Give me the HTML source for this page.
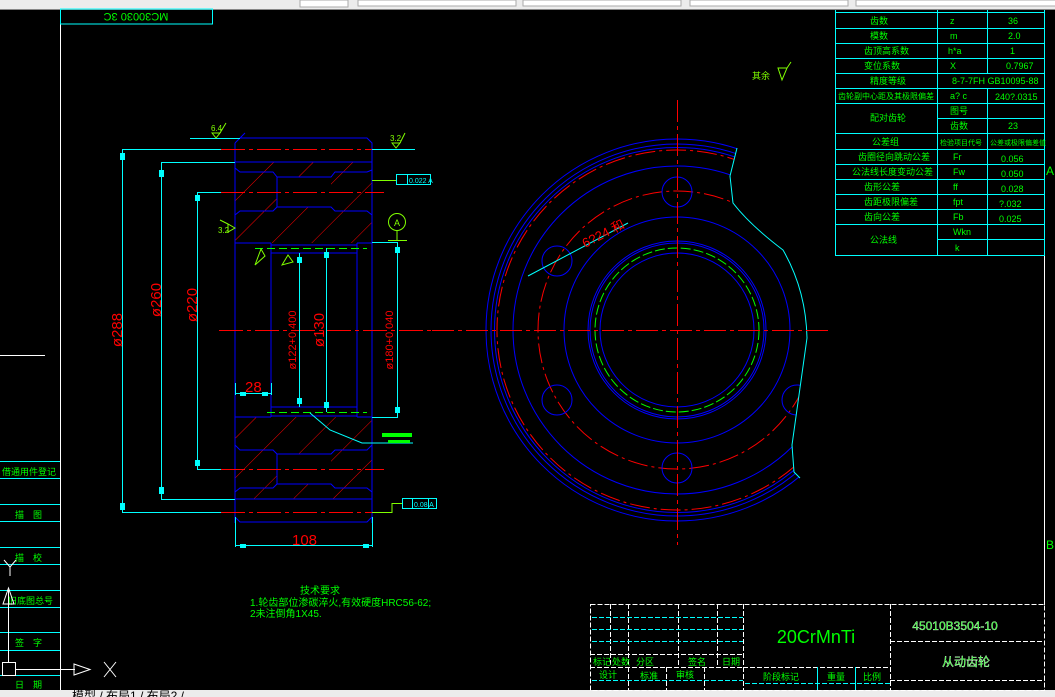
<!DOCTYPE html>
<html><head><meta charset="utf-8"><style>
html,body{margin:0;padding:0;background:#000;width:1055px;height:697px;overflow:hidden}
svg{display:block}
text{font-family:"Liberation Sans","Noto Sans CJK SC",sans-serif}
</style></head><body>
<svg width="1055" height="697" viewBox="0 0 1055 697" xmlns="http://www.w3.org/2000/svg">
<defs>
<pattern id="h" width="28" height="28" patternUnits="userSpaceOnUse" patternTransform="rotate(45)">
<line x1="0" y1="0" x2="0" y2="28" stroke="#f00" stroke-width="1"/>
</pattern>
<clipPath id="cut"><path d="M470 90 L737 90 L737 148 L730 176 L733 203 Q750 225 783 250 Q806 290 807 338 L792 445 L794 472 L800 478 L800 540 L470 540 Z"/></clipPath>
</defs>
<rect width="1055" height="697" fill="#000"/>
<rect x="0" y="0" width="1055" height="9" fill="#ececec"/>
<line x1="0" y1="9.5" x2="1055" y2="9.5" stroke="#888"/>
<rect x="300" y="0" width="48" height="7" fill="#fff" stroke="#aaa"/>
<rect x="358" y="0" width="158" height="6" fill="#fff" stroke="#aaa"/>
<rect x="523" y="0" width="158" height="6" fill="#fff" stroke="#aaa"/>
<rect x="690" y="0" width="158" height="6" fill="#fff" stroke="#aaa"/>
<rect x="856" y="0" width="200" height="6" fill="#fff" stroke="#aaa"/>
<rect x="0" y="690" width="1055" height="7" fill="#ececec"/>
<text x="72" y="700" font-size="12" fill="#000">模型 / 布局1 / 布局2 /</text>

<line x1="60.5" y1="10" x2="60.5" y2="690" stroke="#fff"/>
<line x1="1044.5" y1="10" x2="1044.5" y2="605" stroke="#fff"/>
<line x1="0" y1="355.5" x2="45" y2="355.5" stroke="#fff"/>
<rect x="60.5" y="9" width="152" height="15" fill="none" stroke="#0ff"/>
<text transform="translate(136,13) rotate(180)" font-size="11" fill="#0f0" text-anchor="middle">MC30030 3C</text>
<g stroke="#0ff">
<line x1="0" y1="461.5" x2="60" y2="461.5"/><line x1="0" y1="478.5" x2="60" y2="478.5"/>
<line x1="0" y1="504.5" x2="60" y2="504.5"/><line x1="0" y1="521.5" x2="60" y2="521.5"/>
<line x1="0" y1="547.5" x2="60" y2="547.5"/><line x1="0" y1="564.5" x2="60" y2="564.5"/>
<line x1="0" y1="590.5" x2="60" y2="590.5"/><line x1="0" y1="607.5" x2="60" y2="607.5"/>
<line x1="0" y1="632.5" x2="60" y2="632.5"/><line x1="0" y1="650.5" x2="60" y2="650.5"/>
<line x1="0" y1="675.5" x2="60" y2="675.5"/>
</g>
<g fill="#0f0" font-size="9">
<text x="2" y="475">借通用件登记</text><text x="15" y="518">描　图</text>
<text x="15" y="561">描　校</text><text x="8" y="604">旧底图总号</text>
<text x="15" y="646">签　字</text><text x="15" y="688">日　期</text>
</g>
<g stroke="#fff" fill="none">
<rect x="2.5" y="662.5" width="13" height="13"/>
<line x1="8.5" y1="662" x2="8.5" y2="590"/><path d="M3 604 L8.5 588 L14 604 Z"/>
<line x1="16" y1="669.5" x2="75" y2="669.5"/><path d="M74 664 L90 669.5 L74 675 Z"/>
<path d="M104 662 L116 677 M116 662 L104 677"/>
<path d="M4 560 L10 567 L16 560 M10 567 L10 576"/>
</g>

<g fill="url(#h)" stroke="none">
<path d="M235 162 H372 V243 H235 Z M277 177 V207 H331 V177 Z" fill-rule="evenodd"/>
<path d="M235 417 H372 V499 H235 Z M277 454 V484 H331 V454 Z" fill-rule="evenodd"/>
</g>
<g stroke="#00f" fill="none" stroke-width="1">
<path d="M245 133 L240 138 H367 L372 143 V243 M235 143 L240 138"/>
<path d="M235 143 V523 M372 143 V523"/>
<line x1="235" y1="162" x2="372" y2="162"/>
<path d="M235 168 L240 172 H273 L277 177 V207 L273 211 H240 L235 215"/>
<path d="M277 177 H331 L335 172 H367 L372 170 M277 207 H331 L335 211 H367 L372 215"/>
<line x1="235" y1="243" x2="271" y2="243"/><line x1="357" y1="243" x2="372" y2="243"/>
<line x1="271" y1="243" x2="271" y2="417"/><line x1="357" y1="243" x2="357" y2="417"/>
<line x1="271" y1="245" x2="357" y2="245"/><line x1="271" y1="253" x2="357" y2="253"/>
<line x1="271" y1="407" x2="357" y2="407"/><line x1="271" y1="416" x2="357" y2="416"/>
<line x1="235" y1="417" x2="271" y2="417"/><line x1="357" y1="417" x2="372" y2="417"/>
<path d="M235 445 L240 450 H273 L277 454 V484 L273 488 H240 L235 492"/>
<path d="M277 454 H331 L335 450 H367 L372 445 M277 484 H331 L335 488 H367 L372 492"/>
<line x1="235" y1="499" x2="372" y2="499"/>
<path d="M235 517 L240 522 H367 L372 517"/>
</g>
<g stroke="#f00" stroke-dasharray="24 4 4 4">
<line x1="221" y1="149.5" x2="388" y2="149.5"/>
<line x1="221" y1="192.5" x2="384" y2="192.5"/>
<line x1="219" y1="330.5" x2="440" y2="330.5"/>
<line x1="221" y1="469.5" x2="384" y2="469.5"/>
<line x1="221" y1="512.5" x2="384" y2="512.5"/>
</g>
<g stroke="#0f0" stroke-dasharray="8 4">
<line x1="255" y1="248.5" x2="367" y2="248.5"/><line x1="267" y1="412.5" x2="367" y2="412.5"/>
</g>
<g stroke="#0ff" fill="none">
<path d="M221 149.5 H122.5 V512.5 H221"/>
<path d="M235 162.5 H161.5 V499.5 H235"/>
<path d="M221 192.5 H197.5 V469.5 H221"/>
<path d="M190 138.5 H240"/><path d="M372 149.5 H415"/>
<line x1="299.5" y1="253" x2="299.5" y2="407"/><line x1="326.5" y1="248" x2="326.5" y2="412"/>
<path d="M372 242.5 H397.5 V417.5 H372"/>
<line x1="235" y1="393.5" x2="271" y2="393.5"/><line x1="235.5" y1="383" x2="235.5" y2="395"/><line x1="271.5" y1="383" x2="271.5" y2="395"/>
<line x1="235.5" y1="517" x2="235.5" y2="547"/><line x1="372.5" y1="517" x2="372.5" y2="547"/>
<line x1="235" y1="545.5" x2="372" y2="545.5"/>
<path d="M310 413 L330 430 L362 443 H413"/>
<rect x="396.5" y="174.5" width="34" height="10"/><line x1="407.5" y1="174" x2="407.5" y2="185"/>
<rect x="402.5" y="498.5" width="34" height="10"/><line x1="412.5" y1="498" x2="412.5" y2="509"/><line x1="428.5" y1="498" x2="428.5" y2="509"/>
</g>
<g fill="#0ff">
<rect x="120" y="153" width="5" height="7"/><rect x="120" y="503" width="5" height="7"/>
<rect x="159" y="170" width="5" height="7"/><rect x="159" y="487" width="5" height="7"/>
<rect x="195" y="195" width="5" height="6"/><rect x="195" y="460" width="5" height="6"/>
<rect x="297" y="257" width="5" height="6"/><rect x="297" y="398" width="5" height="6"/>
<rect x="324" y="252" width="5" height="6"/><rect x="324" y="402" width="5" height="6"/>
<rect x="395" y="247" width="5" height="6"/><rect x="395" y="407" width="5" height="6"/>
<rect x="240" y="392" width="6" height="4"/><rect x="262" y="392" width="6" height="4"/>
<rect x="240" y="544" width="6" height="4"/><rect x="363" y="544" width="6" height="4"/>
</g>
<g stroke="#80ff00" fill="none">
<path d="M372 180.5 H396"/><path d="M372 512.5 H392 V503.5 H402"/>
<circle cx="397" cy="222" r="8.5"/><line x1="397" y1="230" x2="397" y2="240"/><line x1="388" y1="240.5" x2="407" y2="240.5"/>
<path d="M212 133 L216 138 L220 133 Z M220 133 L226 123"/>
<path d="M392 143 L396 148 L400 143 Z M400 143 L405 133"/>
<path d="M235 228 L228 224 V232 Z M228 224 L220 220"/>
<path d="M255 265 L261 249 L265 256 Z"/><path d="M282 265 L288 255 L293 262 Z"/>
<path d="M778 68 L782 80 L787 68 Z M787 68 L791 62"/>
</g>
<rect x="382" y="433" width="30" height="4" fill="#0f0"/><rect x="388" y="440" width="22" height="3" fill="#0f0"/>
<g fill="#80ff00" font-size="8">
<text x="211" y="131">6.4</text><text x="390" y="141">3.2</text><text x="218" y="233">3.2</text><text x="752" y="79" font-size="9">其余</text>
<text x="394" y="226" font-size="9">A</text>
</g>
<g fill="#0ff" font-size="7"><text x="409" y="183">0.022 A</text><text x="414" y="507">0.08 A</text></g>
<g fill="#f00" font-size="15">
<text transform="translate(122,330) rotate(-90)" text-anchor="middle">ø288</text>
<text transform="translate(161,300) rotate(-90)" text-anchor="middle">ø260</text>
<text transform="translate(197,305) rotate(-90)" text-anchor="middle">ø220</text>
<text transform="translate(296,340) rotate(-90)" text-anchor="middle" font-size="11">ø122+0.400</text>
<text transform="translate(324,330) rotate(-90)" text-anchor="middle">ø130</text>
<text transform="translate(393,340) rotate(-90)" text-anchor="middle" font-size="11">ø180+0.040</text>
<text x="245" y="392">28</text><text x="292" y="545">108</text>
</g>
<g fill="#0f0" font-size="10">
<text x="300" y="594">技术要求</text>
<text x="250" y="606">1.轮齿部位渗碳淬火,有效硬度HRC56-62;</text>
<text x="250" y="617">2未注倒角1X45.</text>
</g>

<g clip-path="url(#cut)" fill="none" stroke-width="1">
<circle cx="677" cy="330" r="191" stroke="#00f"/>
<circle cx="677" cy="330" r="186" stroke="#00f"/>
<circle cx="677" cy="330" r="182.5" stroke="#00f"/>
<circle cx="677" cy="330" r="180" stroke="#f00" stroke-dasharray="20 4 3 4"/>
<circle cx="677" cy="330" r="164" stroke="#00f"/>
<circle cx="677" cy="330" r="139" stroke="#f00" stroke-dasharray="20 4 3 4"/>
<circle cx="797" cy="400" r="15" stroke="#00f"/>
</g>
<g fill="none" stroke-width="1" stroke="#00f">
<circle cx="677" cy="330" r="113"/>
<circle cx="677" cy="330" r="89"/><circle cx="677" cy="330" r="87"/>
<circle cx="677" cy="330" r="77"/>
<circle cx="677" cy="192" r="15"/><circle cx="557" cy="261" r="15"/><circle cx="557" cy="400" r="15"/><circle cx="677" cy="468" r="15"/>
<circle cx="677" cy="330" r="82" stroke="#0f0" stroke-dasharray="10 3"/>
</g>
<path d="M737 148 L730 176 L733 203 Q750 225 783 250 Q806 290 807 338 L792 445 L794 472 L800 478" fill="none" stroke="#0ff"/>
<g stroke="#f00" stroke-dasharray="22 4 4 4">
<line x1="677.5" y1="100" x2="677.5" y2="545"/>
<line x1="432" y1="330.5" x2="830" y2="330.5"/>
</g>
<line x1="528" y1="276" x2="628" y2="223" stroke="#0ff"/>
<text transform="translate(585,248) rotate(-27)" fill="#f00" font-size="13">6?24 和</text>

<g stroke="#0ff" fill="none">
<line x1="835.5" y1="10" x2="835.5" y2="255"/><line x1="1044.5" y1="10" x2="1044.5" y2="255"/>
<line x1="937.5" y1="10" x2="937.5" y2="255"/><line x1="987.5" y1="10" x2="987.5" y2="73"/><line x1="987.5" y1="88" x2="987.5" y2="255"/>
<path d="M835 12.5H1045M835 28.5H1045M835 43.5H1045M835 58.5H1045M835 73.5H1045M835 88.5H1045M835 103.5H1045M937 118.5H1045M835 133.5H1045M835 149.5H1045M835 164.5H1045M835 179.5H1045M835 194.5H1045M835 209.5H1045M835 224.5H1045M937 239.5H1045M835 255.5H1045"/>
</g>
<g fill="#0f0" font-size="9">
<text x="870" y="24">齿数</text><text x="870" y="39">模数</text><text x="864" y="54">齿顶高系数</text><text x="864" y="69">变位系数</text>
<text x="870" y="84">精度等级</text><text x="838" y="99" font-size="8">齿轮副中心距及其极限偏差</text>
<text x="870" y="121">配对齿轮</text><text x="872" y="145">公差组</text>
<text x="858" y="160">齿圈径向跳动公差</text><text x="852" y="175">公法线长度变动公差</text>
<text x="864" y="190">齿形公差</text><text x="864" y="205">齿距极限偏差</text><text x="864" y="220">齿向公差</text><text x="870" y="243">公法线</text>
<text x="950" y="24">z</text><text x="1008" y="24">36</text>
<text x="950" y="39">m</text><text x="1008" y="39">2.0</text>
<text x="948" y="54">h*a</text><text x="1010" y="54">1</text>
<text x="950" y="69">X</text><text x="1006" y="69">0.7967</text>
<text x="952" y="84">8-7-7FH GB10095-88</text>
<text x="950" y="99">a? c</text><text x="995" y="100">240?.0315</text>
<text x="950" y="114">图号</text><text x="950" y="129">齿数</text><text x="1008" y="129">23</text>
<text x="940" y="145" font-size="7">检验项目代号</text><text x="990" y="145" font-size="7">公差或极限偏差值</text>
<text x="953" y="160">Fr</text><text x="1001" y="162">0.056</text>
<text x="953" y="175">Fw</text><text x="1001" y="177">0.050</text>
<text x="953" y="190">ff</text><text x="1001" y="192">0.028</text>
<text x="953" y="205">fpt</text><text x="999" y="207">?.032</text>
<text x="953" y="220">Fb</text><text x="999" y="222">0.025</text>
<text x="953" y="235">Wkn</text><text x="955" y="251">k</text>
</g>
<text x="1046" y="175" fill="#0f0" font-size="12">A</text>
<text x="1046" y="549" fill="#0f0" font-size="12">B</text>

<g stroke="#fff" fill="none" stroke-dasharray="5 2">
<rect x="590.5" y="604.5" width="454" height="86"/>
<line x1="743.5" y1="604" x2="743.5" y2="690"/><line x1="890.5" y1="604" x2="890.5" y2="690"/>
<line x1="610.5" y1="604" x2="610.5" y2="667"/><line x1="628.5" y1="604" x2="628.5" y2="667"/>
<line x1="678.5" y1="604" x2="678.5" y2="667"/><line x1="717.5" y1="604" x2="717.5" y2="667"/>
<line x1="590" y1="654.5" x2="743" y2="654.5"/><line x1="590" y1="667.5" x2="743" y2="667.5"/>
<line x1="743" y1="667.5" x2="890" y2="667.5"/>
<line x1="890" y1="641.5" x2="1045" y2="641.5"/><line x1="890" y1="680.5" x2="1045" y2="680.5"/>
<line x1="628.5" y1="667" x2="628.5" y2="690"/><line x1="666.5" y1="667" x2="666.5" y2="690"/><line x1="704.5" y1="667" x2="704.5" y2="690"/>
</g>
<g stroke="#0ff" stroke-dasharray="5 2">
<line x1="592" y1="617.5" x2="743" y2="617.5"/><line x1="592" y1="629.5" x2="743" y2="629.5"/><line x1="592" y1="641.5" x2="743" y2="641.5"/>
<line x1="592" y1="680.5" x2="743" y2="680.5"/><line x1="745" y1="683.5" x2="890" y2="683.5"/>
</g>
<g stroke="#0ff"><line x1="817.5" y1="667" x2="817.5" y2="690"/><line x1="855.5" y1="667" x2="855.5" y2="690"/></g>
<g fill="#0f0" font-size="9">
<text x="593" y="665">标记</text><text x="612" y="665">处数</text><text x="636" y="665">分区</text><text x="688" y="665">签名</text><text x="722" y="665">日期</text>
<text x="599" y="678">设计</text><text x="640" y="679">标准</text><text x="676" y="678">审核</text>
<text x="763" y="680">阶段标记</text><text x="827" y="680">重量</text><text x="863" y="680">比例</text>
</g>
<text x="816" y="643" fill="#0f0" font-size="18" text-anchor="middle">20CrMnTi</text>
<text x="955" y="630" fill="#0f0" font-size="12" text-anchor="middle" stroke="#fff" stroke-width="0.3">45010B3504-10</text>
<text x="966" y="666" fill="#0f0" font-size="12" text-anchor="middle" stroke="#fff" stroke-width="0.3">从动齿轮</text>
</svg>
</body></html>
